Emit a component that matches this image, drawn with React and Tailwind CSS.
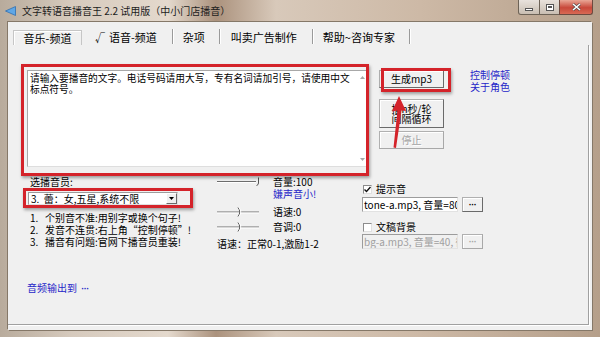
import React from 'react'

const font = "font-['Noto_Sans_CJK_SC','Noto_Sans',sans-serif]"
const latin = "font-['Liberation_Sans',sans-serif]"

const Sep = () => <div className="w-[2px] h-[15px] border-l border-[#9a9a9a] border-r border-r-white" />

const Btn = ({ className = '', disabled, children }) => (
  <div
    className={`flex items-center justify-center text-center bg-[#f0f0f0] border border-[#b0b0b0] border-r-[#6a6a6a] border-b-[#6a6a6a] shadow-[inset_1px_1px_0_#fff] ${
      disabled ? 'text-[#a3a3a3] border-r-[#a8a8a8] border-b-[#a8a8a8]' : 'text-black'
    } ${className}`}
  >
    {children}
  </div>
)

const Check = ({ checked }) => (
  <div className="w-[9px] h-[9px] bg-white border border-[#8c8c8c] border-r-[#e0e0e0] border-b-[#e0e0e0] flex items-center justify-center">
    {checked && (
      <svg width="7" height="7" viewBox="0 0 7 7">
        <path d="M0.5 3.5 L2.5 5.5 L6.5 1" fill="none" stroke="#111" strokeWidth="1.4" />
      </svg>
    )}
  </div>
)

// trackbar with thumb drawn as a small curved tick
const Track = ({ end }) =>
  end ? (
    <svg width="56" height="12" viewBox="0 0 56 12" className="shrink-0">
      <line x1="0" y1="5.5" x2="39" y2="5.5" stroke="#6e6e6e" />
      <line x1="0" y1="6.5" x2="39" y2="6.5" stroke="#ffffff" />
      <path d="M41.5 1.5 L41.5 7 Q41.5 9 39.5 9.5" fill="none" stroke="#555" />
    </svg>
  ) : (
    <svg width="56" height="12" viewBox="0 0 56 12" className="shrink-0">
      <line x1="0" y1="6" x2="42" y2="6" stroke="#6e6e6e" />
      <line x1="0" y1="7" x2="42" y2="7" stroke="#ffffff" />
      <path d="M21 1.5 Q24.5 6 21 10.5" fill="none" stroke="#555" />
      <path d="M22 1.5 Q25.5 6 22 10.5" fill="none" stroke="#fff" />
    </svg>
  )

const Dots = ({ className = '' }) => (
  <span className={`${latin} text-[9px] font-bold tracking-[-0.5px] ${className}`}>···</span>
)

const Field = ({ text, disabled }) => (
  <div className="flex">
    <div
      className={`w-[96px] h-[15px] border border-[#9c9c9c] border-r-[#e2e2e2] border-b-[#e2e2e2] flex items-center overflow-hidden whitespace-nowrap pl-[1px] leading-[12px] ${
        disabled ? 'bg-[#f0f0f0] text-[#a0a0a0]' : 'bg-white text-black'
      }`}
    >
      {text}
    </div>
    <Btn disabled={disabled} className="ml-[4px] w-[21px] h-[15px] leading-[10px]">
      <Dots />
    </Btn>
  </div>
)

export default function App() {
  return (
    <div
      className={`relative w-[600px] h-[337px] overflow-hidden flex flex-col text-[10px] text-black ${font} bg-[linear-gradient(90deg,#b8ab9c_0%,#d6cabd_12%,#e4d9cd_28%,#ab927d_36%,#d8c9ba_46%,#cdb9a6_70%,#b59f8a_100%)]`}
    >
      {/* title bar */}
      <div className="h-[22px] shrink-0 flex items-start">
        <svg className="ml-[5px] mt-[6px]" width="11" height="10" viewBox="0 0 11 10">
          <path d="M10.5 0.5 L10.5 9.5 L0.5 5 Z" fill="#5fa7e6" stroke="#2f6fb0" strokeWidth="0.8" />
        </svg>
        <span className="ml-[6px] mt-[4px] leading-[14px] text-[#1c1c1c] whitespace-nowrap">
          文字转语音播音王 2.2 试用版（中小门店播音）
        </span>
        <div className="ml-auto mr-[7px] flex h-[15px]">
          <div className="w-[22px] h-full border border-t-0 border-[#6d6357] rounded-bl-[3px] bg-[linear-gradient(#e8e2dc,#c9beb2)] flex items-center justify-center">
            <div className="w-[8px] h-[3px] mt-[4px] bg-white border border-[#555]" />
          </div>
          <div className="w-[19px] h-full border-y border-t-0 border-[#6d6357] bg-[linear-gradient(#e8e2dc,#c9beb2)] flex items-center justify-center">
            <div className="w-[8px] h-[7px] bg-white border border-[#555] flex items-center justify-center">
              <div className="w-[4px] h-[2px] border border-[#555]" />
            </div>
          </div>
          <div className="w-[34px] h-full border border-t-0 border-[#6d4a40] rounded-br-[3px] bg-[linear-gradient(#e9a796,#c8483a_55%,#d86a55)] flex items-center justify-center">
            <svg width="9" height="8" viewBox="0 0 9 8">
              <path d="M1 1 L8 7 M8 1 L1 7" stroke="#444" strokeWidth="2.6" />
              <path d="M1 1 L8 7 M8 1 L1 7" stroke="#fff" strokeWidth="1.6" />
            </svg>
          </div>
        </div>
      </div>

      {/* frame + client */}
      <div className="flex-1 flex px-[8px] pb-[7px]">
        <div className="flex-1 flex flex-col bg-[#f0f0f0] shadow-[-1px_-1px_0_#857868,1px_1px_0_#857868]">
          {/* tabs */}
          <div className="mt-[6px] h-[17px] flex items-end text-[11px] leading-[15px] whitespace-nowrap">
            <div className="ml-[5px] w-[69px] h-[15px] border border-b-0 border-[#c6c6c6] shadow-[inset_1px_1px_0_#fff] flex items-center justify-center">
              音乐-频道
            </div>
            <div className="ml-[13px] h-[15px] flex items-center">
              <span className="text-[10px]">√</span>
              <span className="ml-[4px]">语音-频道</span>
            </div>
            <div className="ml-[15px] mb-[1px]"><Sep /></div>
            <div className="ml-[9px] h-[15px] flex items-center">杂项</div>
            <div className="ml-[14px] mb-[1px]"><Sep /></div>
            <div className="ml-[10px] h-[15px] flex items-center">叫卖广告制作</div>
            <div className="ml-[15px] mb-[1px]"><Sep /></div>
            <div className="ml-[9px] h-[15px] flex items-center">帮助~咨询专家</div>
            <div className="ml-[14px] mb-[1px]"><Sep /></div>
          </div>

          {/* panel */}
          <div className="h-[280px] mr-[3px] border-r border-b border-[#a0a0a0] shadow-[1px_1px_0_#fff] flex flex-col">
            <div className="pt-[25px] pl-[19px] flex items-start">
              <div className="w-[341px] h-[97px] bg-white border border-[#a8a8a8] border-r-[#dedede] border-b-[#dedede] flex">
                <div className="flex-1 pl-[2px] pt-[2px] text-[9.7px] leading-[11px] whitespace-nowrap overflow-hidden">
                  请输入要播音的文字。电话号码请用大写，专有名词请加引号，请使用中文
                  <br />
                  标点符号。
                </div>
                <div className="w-[9px] flex flex-col justify-between items-center py-[5px]">
                  <svg width="5" height="3" viewBox="0 0 5 3"><path d="M0 3 L2.5 0 L5 3 Z" fill="#a8a8a8" /></svg>
                  <svg width="5" height="3" viewBox="0 0 5 3"><path d="M0 0 L2.5 3 L5 0 Z" fill="#a8a8a8" /></svg>
                </div>
              </div>

              <div className="ml-[11px] w-[65px] flex flex-col">
                <Btn className="h-[18px] leading-[12px]">生成mp3</Btn>
                <Btn className="mt-[11px] h-[29px] leading-[10px]">
                  播n秒/轮
                  <br />
                  间隔循环
                </Btn>
                <Btn disabled className="mt-[3px] h-[18px] leading-[12px] [text-shadow:1px_1px_0_#fff]">停止</Btn>
              </div>

              <div className="ml-[26px] -mt-[1px] leading-[12px] text-[#2626c8]">
                <div>控制停顿</div>
                <div>关于角色</div>
              </div>
            </div>

            <div className="mt-[9px] pl-[20px] flex items-start">
              <div className="w-[189px] flex flex-col">
                <div className="ml-[2px] h-[12px] leading-[12px]">选播音员:</div>
                <div className="mt-[4px] w-[150px] h-[13px] bg-white border border-[#9c9c9c] border-r-[#e0e0e0] border-b-[#e0e0e0] flex items-center">
                  <span className="ml-[2px] flex-1 leading-[11px] whitespace-nowrap">3.&nbsp;&nbsp;蕾：女,五星,系统不限</span>
                  <div className="w-[11px] h-[11px] bg-[#f0f0f0] border border-white border-r-[#6a6a6a] border-b-[#6a6a6a] flex items-center justify-center">
                    <svg width="5" height="3" viewBox="0 0 5 3"><path d="M0 0 L2.5 3 L5 0 Z" fill="#000" /></svg>
                  </div>
                </div>
                <div className="mt-[7px] ml-[2px] leading-[12px] whitespace-nowrap">
                  <div className="flex"><span className="w-[15px]">1.</span><span>个别音不准:用别字或换个句子!</span></div>
                  <div className="flex"><span className="w-[15px]">2.</span><span>发音不连贯:右上角“控制停顿”!</span></div>
                  <div className="flex"><span className="w-[15px]">3.</span><span>播音有问题:官网下播音员重装!</span></div>
                </div>
              </div>

              <div className="w-[145px] flex flex-col leading-[12px] whitespace-nowrap">
                <div className="h-[12px] flex items-center"><Track end /><span>音量:100</span></div>
                <div className="ml-[56px] text-[#2626c8]">嫌声音小!</div>
                <div className="mt-[6px] h-[12px] flex items-center"><Track /><span>语速:0</span></div>
                <div className="mt-[3px] h-[12px] flex items-center"><Track /><span>音调:0</span></div>
                <div className="mt-[5px]">语速：正常0-1,激励1-2</div>
              </div>

              <div className="flex flex-col leading-[12px] whitespace-nowrap">
                <div className="mt-[7px] h-[12px] flex items-center">
                  <div className="ml-[1px]"><Check checked /></div>
                  <span className="ml-[4px]">提示音</span>
                </div>
                <div className="mt-[2px]"><Field text="tone-a.mp3, 音量=80" /></div>
                <div className="mt-[9px] h-[12px] flex items-center">
                  <div className="ml-[1px]"><Check /></div>
                  <span className="ml-[4px]">文稿背景</span>
                </div>
                <div className="mt-[1px]"><Field disabled text="bg-a.mp3, 音量=40, 循环" /></div>
              </div>
            </div>

            <div className="mt-[32px] ml-[19px] leading-[12px] text-[#2626c8] whitespace-nowrap">
              音频输出到 <Dots className="ml-[2px]" />
            </div>
          </div>
        </div>
      </div>

      {/* red annotations drawn over the window */}
      <div className="absolute left-[21px] top-[64px] w-[348px] h-[112px] border-[3px] border-[#d4232a] shadow-[1px_2px_3px_rgba(0,0,0,0.35)] pointer-events-none" />
      <div className="absolute left-[381px] top-[68px] w-[70px] h-[24px] border-[3px] border-[#d4232a] shadow-[1px_2px_3px_rgba(0,0,0,0.35)] pointer-events-none" />
      <div className="absolute left-[23px] top-[188px] w-[170px] h-[20px] border-[3px] border-[#d4232a] shadow-[1px_2px_3px_rgba(0,0,0,0.35)] pointer-events-none" />
      <svg className="absolute left-0 top-0 pointer-events-none" width="600" height="337" viewBox="0 0 600 337">
        <polygon
          points="399,96 406,111 401.5,110.5 396,148 393.5,147.5 397.5,110.5 392,111.5"
          fill="#d4232a"
        />
      </svg>
    </div>
  )
}
